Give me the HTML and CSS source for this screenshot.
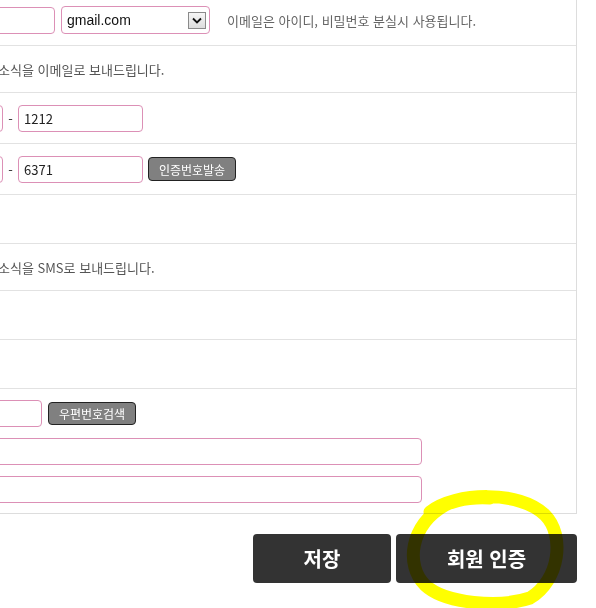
FILE: index.html
```html
<!DOCTYPE html>
<html lang="ko">
<head>
    <meta charset="UTF-8">
    <meta name="viewport" content="width=device-width, initial-scale=1.0">
    <title>회원정보 수정</title>
    <link rel="stylesheet" href="styles.css">
</head>
<body>
    <div class="page">
        <div class="form-table">
            <div class="row row-email">
                <input type="text" class="field email-id">
                <div class="select-box">
                    <select class="select">
                        <option>gmail.com</option>
                        <option>naver.com</option>
                        <option>daum.net</option>
                    </select>
                    <span class="select-arrow">
                        <svg width="10" height="7" viewBox="0 0 10 7"><path d="M1 1.5 L5 5.5 L9 1.5" fill="none" stroke="#111" stroke-width="1.8"/></svg>
                    </span>
                </div>
                <span class="hint">이메일은 아이디, 비밀번호 분실시 사용됩니다.</span>
            </div>
            <div class="row row-text">
                <span class="agree"><input type="checkbox" checked> 수신</span>
                <span class="note">소식을 이메일로 보내드립니다.</span>
            </div>
            <div class="row row-field">
                <input type="text" class="field tel-a" value="02">
                <span class="dash">-</span>
                <input type="text" class="field tel-b" value="1212">
            </div>
            <div class="row row-field">
                <input type="text" class="field tel-a" value="010">
                <span class="dash">-</span>
                <input type="text" class="field tel-b" value="6371">
                <button class="btn-small">인증번호발송</button>
            </div>
            <div class="row row-empty"></div>
            <div class="row row-text">
                <span class="agree"><input type="checkbox" checked> 수신</span>
                <span class="note">소식을 SMS로 보내드립니다.</span>
            </div>
            <div class="row row-empty"></div>
            <div class="row row-empty"></div>
            <div class="row row-address">
                <div class="zip-line">
                    <input type="text" class="field zip">
                    <button class="btn-small">우편번호검색</button>
                </div>
                <input type="text" class="field addr">
                <input type="text" class="field addr">
            </div>
        </div>
        <div class="actions">
            <button class="btn-big btn-save">저장</button>
            <button class="btn-big btn-auth">회원 인증</button>
        </div>
    </div>

    <!-- highlight mark drawn over the button -->
    <svg class="mark" width="180" height="123" viewBox="0 0 180 123">
        <path d="M30 27 C55 7, 120 5, 145 30 C165 50, 160 95, 130 113 C100 123, 45 119, 25 100 C5 80, 10 40, 45 20 C60 13, 80 12, 90 13" fill="none" stroke="#ffff00" stroke-width="13" stroke-linecap="round"/>
    </svg>
</body>
</html>
```

FILE: styles.css
```css
html,
body {
    height: 100%;
}

body {
    margin: 0;
    padding: 0;
    background-color: #ffffff;
    font-family: "Noto Sans CJK KR", "Liberation Sans", sans-serif;
    color: #555555;
    position: relative;
}

.page {
    width: 577px;
}

.form-table {
    margin-left: -140px;
    margin-top: -5px;
    width: 717px;
    box-sizing: border-box;
    border-right: 1px solid #dddddd;
    border-bottom: 1px solid #dddddd;
}

.row {
    display: flex;
    align-items: center;
    box-sizing: border-box;
    padding-left: 20px;
    border-bottom: 1px solid #e2e2e2;
}

.row:last-child {
    border-bottom: none;
}

.row-email {
    height: 51px;
}

.row-text {
    height: 47px;
}

.row-field {
    height: 51px;
}

.row-empty {
    height: 49px;
}

.row-address {
    height: 124px;
    flex-direction: column;
    align-items: flex-start;
    justify-content: center;
    gap: 11px;
}

.field {
    height: 27px;
    box-sizing: border-box;
    border: 1px solid #dc90b6;
    border-radius: 4px;
    padding: 0 5px;
    font-family: "Noto Sans CJK KR", sans-serif;
    font-size: 13px;
    color: #222222;
    background: #ffffff;
    margin: 0;
}

.email-id {
    width: 175px;
}

.select-box {
    display: flex;
    align-items: center;
    width: 149px;
    height: 28px;
    box-sizing: border-box;
    margin-left: 6px;
    border: 1px solid #dc90b6;
    border-radius: 4px;
    padding: 0 3px 0 0;
}

.select {
    flex: 1;
    appearance: none;
    -webkit-appearance: none;
    border: none;
    background: transparent;
    font-family: "Liberation Sans", sans-serif;
    font-size: 14px;
    color: #111111;
    padding: 0 0 0 5px;
    height: 24px;
    outline: none;
}

.select-arrow {
    display: flex;
    align-items: center;
    justify-content: center;
    width: 18px;
    height: 17px;
    box-sizing: border-box;
    border: 1px solid #8a8a8a;
    background: linear-gradient(#f6f6f6, #dcdcdc);
}

.hint {
    margin-left: 17px;
    font-size: 13px;
    color: #666666;
    white-space: nowrap;
}

.agree {
    display: inline-block;
    width: 118px;
    overflow: hidden;
    font-size: 13px;
    white-space: nowrap;
}

.note {
    font-size: 13px;
    color: #555555;
    white-space: nowrap;
}

.tel-a {
    width: 123px;
}

.tel-b {
    width: 125px;
}

.dash {
    display: inline-block;
    width: 15px;
    text-align: center;
    font-size: 13px;
    color: #333333;
}

.btn-small {
    width: 88px;
    height: 24px;
    margin-left: 5px;
    padding: 0;
    border: 1px solid #222222;
    border-radius: 4px;
    background-color: #808080;
    color: #ffffff;
    font-family: "Noto Sans CJK KR", sans-serif;
    font-size: 12px;
    cursor: pointer;
}

.zip-line {
    display: flex;
    align-items: center;
}

.zip {
    width: 162px;
}

.zip-line .btn-small {
    margin-left: 6px;
    height: 23px;
}

.addr {
    width: 542px;
}

.actions {
    display: flex;
    justify-content: flex-end;
    gap: 5px;
    margin-top: 20px;
}

.btn-big {
    height: 49px;
    border: none;
    border-radius: 4px;
    background-color: #333333;
    color: #ffffff;
    font-family: "Noto Sans CJK KR", sans-serif;
    font-size: 20px;
    font-weight: bold;
    cursor: pointer;
}

.btn-save {
    width: 138px;
}

.btn-auth {
    width: 181px;
}

.mark {
    position: absolute;
    left: 400px;
    top: 485px;
    pointer-events: none;
    mix-blend-mode: multiply;
}
```
